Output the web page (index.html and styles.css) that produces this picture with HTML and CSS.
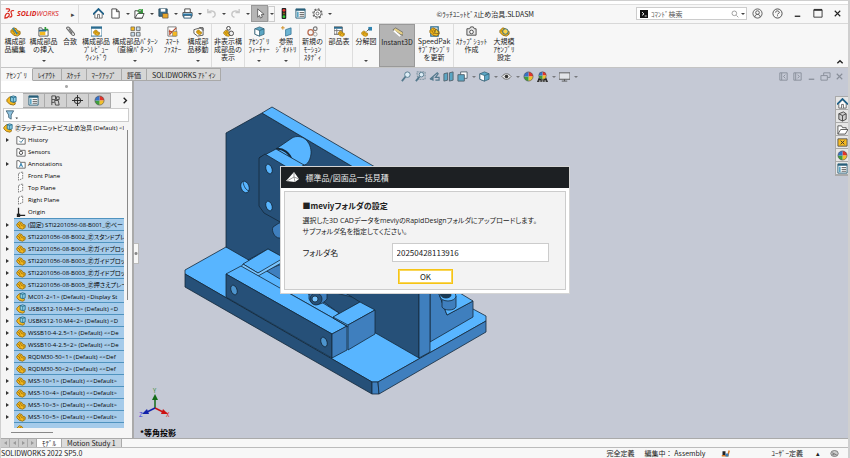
FILE: index.html
```
<!DOCTYPE html>
<html lang="ja">
<head>
    <meta charset="utf-8">
    <title>SOLIDWORKS</title>
    <link rel="stylesheet" href="styles.css">
</head>
<body>
    <!-- shared icons -->
    <svg class="defs" aria-hidden="true">
        <symbol id="part" viewBox="0 0 12 12">
            <path d="M1 5l3-3 3 1 1 2 3 1v3l-3 2-4-1-3-3z" fill="#f5b921" stroke="#8a6100" stroke-width=".9"/>
            <path d="M4 5c0-1 2-1 2 0s0 2 2 2 2 1 1 2M2 5l2 1 1 3" fill="none" stroke="#8a6100" stroke-width=".8"/>
        </symbol>
        <symbol id="asm" viewBox="0 0 12 12">
            <path d="M1 5l3-3 3 1v4l3 1v2l-2 1-4-1-3-3z" fill="#f5b921" stroke="#8a6100" stroke-width=".9"/>
            <path d="M5 2l3-1 3 1v5l-3 1-3-1z" fill="#8fd0e8" stroke="#175f80" stroke-width=".9"/>
            <path d="M5 2l3 1 3-1M8 3v5" fill="none" stroke="#175f80" stroke-width=".8"/>
        </symbol>
        <symbol id="folder" viewBox="0 0 12 12">
            <path d="M1 11V2h3l1 2h6v7z" fill="#fff" stroke="#555"/>
        </symbol>
        <symbol id="plane" viewBox="0 0 12 12">
            <path d="M3 3l5-2v8l-5 2z" fill="#fff" stroke="#666" stroke-dasharray="2 1"/>
        </symbol>
        <symbol id="ball" viewBox="0 0 12 12">
            <circle cx="6" cy="6" r="5" fill="#eee"/>
            <path d="M6 6V1a5 5 0 0 1 5 5z" fill="#e2352b"/>
            <path d="M6 6h5a5 5 0 0 1-5 5z" fill="#f0c02c"/>
            <path d="M6 6v5a5 5 0 0 1-5-5z" fill="#3f9f3d"/>
            <path d="M6 6H1a5 5 0 0 1 5-5z" fill="#3672c8"/>
            <circle cx="6" cy="6" r="5" fill="none" stroke="#444" stroke-width=".6"/>
        </symbol>
        <symbol id="cube" viewBox="0 0 12 12">
            <path d="M1 3l5-2 5 2v6l-5 2-5-2z" fill="#5ba6c4" stroke="#2d5c70" stroke-width=".8"/>
            <path d="M1 3l5 2v6l-5-2z" fill="#fff" stroke="#2d5c70" stroke-width=".8"/>
            <path d="M6 5l5-2" stroke="#2d5c70" stroke-width=".8"/>
        </symbol>
        <symbol id="house" viewBox="0 0 12 12">
            <path d="M2 6v5h8V6L6 2z" fill="#fff" stroke="#444" stroke-width=".8"/>
            <path d="M0 7l6-6 6 6" fill="none" stroke="#1c5f88" stroke-width="1.8"/>
            <path d="M5 11V7h2v4" fill="#fff" stroke="#444" stroke-width=".8"/>
        </symbol>
        <symbol id="list" viewBox="0 0 12 12">
            <path d="M1 1h10v10H1z" fill="#fff" stroke="#285f7a"/>
            <path d="M1 1h10v2H1z" fill="#285f7a"/>
            <path d="M2 4h2v6H2z" fill="#5ba6c4"/>
            <path d="M5 5h5M5 7h5M5 9h5" stroke="#555"/>
        </symbol>
        <symbol id="min" viewBox="0 0 12 12"><path d="M3 9h6" stroke="currentColor" stroke-width="1.4"/></symbol>
        <symbol id="close" viewBox="0 0 12 12"><path d="M3 3l6 6M9 3L3 9" stroke="currentColor" stroke-width="1.2"/></symbol>
    </svg>

    <div class="app">
        <header class="titlebar">
            <div class="brand">
                <svg class="ds" viewBox="0 0 12 12"><path d="M2 1h3c2 0 1 3-1 3M1 11c0-4 2-6 4-5s0 5-4 5zM11 3C8 2 7 4 8 6s1 4-2 4" fill="none" stroke="#d9261c" stroke-width="1.3"/></svg>
                <span class="wordmark"><b>SOLID</b>WORKS</span>
                <button class="more" aria-label="メニュー">▸</button>
            </div>
            <div class="quick">
                <button class="tool" aria-label="ホーム"><svg><use href="#house"/></svg></button>
                <button class="tool" aria-label="新規"><svg viewBox="0 0 12 12"><path d="M2 1h5l3 3v7H2zM7 1v3h3" fill="#fff" stroke="#444"/></svg></button><button class="caret" aria-label="新規オプション"></button>
                <button class="tool" aria-label="開く"><svg viewBox="0 0 12 12"><path d="M1 11V3h3l1 1h4v7z" fill="#fff" stroke="#444"/><path d="M1 11l3-5h7l-2 5z" fill="#fff" stroke="#444"/><path d="M4 4c1-3 4-3 5 0M9 1v4H5" fill="none" stroke="#2e9a35" stroke-width="1.4"/></svg></button><button class="caret" aria-label="開くオプション"></button>
                <button class="tool" aria-label="保存"><svg viewBox="0 0 12 12"><path d="M1 1h9v8H1z" fill="#3b6e8c" stroke="#26475a"/><path d="M3 1h5v3H3z" fill="#fff"/><path d="M5 6h6v5H5z" fill="#e8a62a" stroke="#555" stroke-width=".7"/></svg></button><button class="caret" aria-label="保存オプション"></button>
                <button class="tool" aria-label="印刷"><svg viewBox="0 0 12 12"><path d="M3 5V1h6v4M1 5h10v4H1z" fill="#fff" stroke="#444"/><path d="M1 6h10v3H1z" fill="#2f7fb0"/><path d="M2 8h8v3H2z" fill="#fff" stroke="#2a5570"/></svg></button><button class="caret" aria-label="印刷オプション"></button>
                <button class="tool off" aria-label="元に戻す"><svg viewBox="0 0 12 12"><path d="M2 1v4h4M2 5c3-3 8-2 8 2 0 2-2 3-3 3" fill="none" stroke="#c6c6c6" stroke-width="1.5"/></svg></button><button class="caret" aria-label="元に戻すオプション"></button>
                <button class="tool off" aria-label="やり直し"><svg viewBox="0 0 12 12"><path d="M10 1v4H6M10 5C7 2 2 3 2 7c0 2 2 3 3 3" fill="none" stroke="#c6c6c6" stroke-width="1.5"/></svg></button><button class="caret" aria-label="やり直しオプション"></button>
                <button class="tool on" aria-label="選択"><svg viewBox="0 0 12 12"><path d="M4 1v9l2-2 1 3 2-1-1-3h3z" fill="#fff" stroke="#444" stroke-width=".8"/></svg></button><button class="caret boxed" aria-label="選択オプション"></button>
                <button class="tool" aria-label="再構築"><svg viewBox="0 0 12 12"><rect x="4" y="0" width="5" height="12" rx="1" fill="#222"/><circle cx="6.500" cy="2.500" r="1.500" fill="#e33"/><circle cx="6.500" cy="6" r="1.200" fill="#886c18"/><circle cx="6.500" cy="9.500" r="1.500" fill="#3c3"/></svg></button>
                <button class="tool" aria-label="ファイル プロパティ"><svg><use href="#list"/></svg></button>
                <button class="tool" aria-label="オプション"><svg viewBox="0 0 12 12"><circle cx="6" cy="6" r="4" fill="#fff" stroke="#666"/><circle cx="6" cy="6" r="5" fill="none" stroke="#666" stroke-width="1.300" stroke-dasharray="2 1.900"/><circle cx="6" cy="6" r="1.600" fill="none" stroke="#666"/></svg></button><button class="caret" aria-label="その他"></button>
            </div>
            <div class="doc-title">©ﾗｯﾁﾕﾆｯﾄﾋﾞｽ止め治具.SLDASM</div>
            <div class="search">
                <svg viewBox="0 0 12 12"><path d="M0 0h12v12H0z" fill="#111"/><path d="M3 3l3 3-3 2M7 9h3" fill="none" stroke="#fff" stroke-width="1.300"/></svg>
                <input type="text" placeholder="ｺﾏﾝﾄﾞ検索" aria-label="コマンド検索">
                <svg viewBox="0 0 12 12"><circle cx="5" cy="5" r="3.500" fill="none" stroke="#777"/><path d="M8 8l3 3" stroke="#777"/></svg>
                <button class="caret" aria-label="検索オプション"></button>
            </div>
            <div class="winbtns">
                <button aria-label="ユーザー"><svg viewBox="0 0 12 12"><circle cx="6" cy="6" r="5" fill="none" stroke="#555"/><circle cx="6" cy="5" r="2" fill="none" stroke="#555"/><path d="M3 10c0-4 6-4 6 0" fill="none" stroke="#555"/></svg></button>
                <button aria-label="ヘルプ"><svg viewBox="0 0 12 12"><circle cx="6" cy="6" r="5" fill="none" stroke="#444"/><path d="M4 5c0-3 4-2 4 0 0 1-2 1-2 2M6 8v1" fill="none" stroke="#444"/></svg></button>
                <button aria-label="最小化"><svg><use href="#min"/></svg></button>
                <button aria-label="最大化"><svg viewBox="0 0 12 12"><path d="M2 2h9v8H2z" fill="none" stroke="#333"/><path d="M2 2h9" stroke="#333" stroke-width="2"/></svg></button>
                <button aria-label="閉じる"><svg><use href="#close"/></svg></button>
            </div>
        </header>

        <nav class="ribbon">
            <button><svg viewBox="0 0 12 12"><use href="#part"/><path d="M3 2l5 7" stroke="#2a82b0" stroke-width="1.600"/></svg>構成部<br>品編集</button>
            <button class="drop"><svg viewBox="0 0 12 12"><use href="#folder"/><path d="M2 6h6v4H2z" fill="#f5b921"/><path d="M8 1v3h3" fill="none" stroke="#2e9a35" stroke-width="1.800"/><path d="M1 4h8v2H1z" fill="#2b6c90"/></svg>構成部品<br>の挿入</button>
            <button><svg viewBox="0 0 12 12"><path d="M2 3l6 7c2 1 3-1 2-2L5 2C3 0 1 2 2 3l5 6M4 3l4 5" fill="none" stroke="#666" stroke-width="1.100"/></svg>合致</button>
            <button><svg viewBox="0 0 12 12"><path d="M0 1h12v10H0z" fill="#fff" stroke="#2b6c90"/><path d="M0 1h12v2H0z" fill="#2b6c90"/><use href="#part" x="2" y="3" width="8" height="8"/></svg>構成部品<br>ﾌﾟﾚﾋﾞｭｰ<br>ｳｨﾝﾄﾞｳ</button>
            <button class="drop"><svg viewBox="0 0 12 12"><path d="M1 1h4v4H1z" fill="#f5b921" stroke="#555" stroke-width=".7"/><path d="M7 1h4v4H7zM1 7h4v4H1zM7 7h4v4H7z" fill="#c7dbe8" stroke="#555" stroke-width=".8"/></svg>構成部品ﾊﾟﾀｰﾝ<br>(直線ﾊﾟﾀｰﾝ)</button>
            <button><svg viewBox="0 0 12 12"><path d="M1 1h9v10H1z" fill="#fff" stroke="#777"/><path d="M3 9l7-7M2 6h4M3 4v6" stroke="#b84d32" stroke-width="1.200"/><path d="M6 6h5v5H6z" fill="#f5b921" stroke="#777" stroke-width=".6"/></svg>ｽﾏｰﾄ<br>ﾌｧｽﾅｰ</button>
            <button class="drop"><svg viewBox="0 0 12 12"><path d="M1 4l7-2 3 3v5l-6 1-4-3z" fill="#fff" stroke="#555"/><use href="#part" x="3" y="3" width="7" height="7"/><path d="M7 2h4v3" fill="none" stroke="#222"/></svg>構成部<br>品移動</button>
            <button class="sep"><svg viewBox="0 0 12 12"><use href="#part" y="3" width="9" height="9"/><circle cx="6" cy="2.500" r="2" fill="#fff" stroke="#333"/><circle cx="9" cy="8" r="2.500" fill="#eee" stroke="#444"/></svg>非表示構<br>成部品の<br>表示</button>
            <button class="sep drop"><svg><use href="#cube"/></svg>ｱｾﾝﾌﾞﾘ<br>ﾌｨｰﾁｬｰ</button>
            <button class="drop"><svg viewBox="0 0 12 12"><path d="M5 4l6-2v7l-6 2z" fill="#6db4d2" stroke="#2b6c90" stroke-width=".8"/><path d="M2 0v4M0 2h4" stroke="#d08d20"/></svg>参照<br>ｼﾞｵﾒﾄﾘ</button>
            <button class="sep"><svg viewBox="0 0 12 12"><circle cx="4" cy="7" r="3" fill="none" stroke="#b86d50" stroke-width="1.400"/><circle cx="9" cy="3" r="2" fill="none" stroke="#777" stroke-width="1.300"/><circle cx="9" cy="9" r="2" fill="none" stroke="#999"/></svg>新規の<br>ﾓｰｼｮﾝ<br>ｽﾀﾃﾞｨ</button>
            <button class="sep"><svg viewBox="0 0 12 12"><path d="M0 1h9v8H0z" fill="#fff" stroke="#555"/><path d="M0 1h9v2H0z" fill="#2b6c90"/><path d="M0 5h9M3 3v6" stroke="#777"/><use href="#part" x="4" y="4" width="8" height="8"/></svg>部品表</button>
            <button class="sep drop"><svg viewBox="0 0 12 12"><use href="#part" y="4" width="8" height="8"/><path d="M8 1h4v4H8z" fill="#2f83b0"/><path d="M6 6l3-3" stroke="#555"/></svg>分解図</button>
            <button class="active"><svg viewBox="0 0 12 12"><path d="M1 3l3-2 8 5v3L9 8z" fill="#e6d188" stroke="#555" stroke-width=".7"/><path d="M2 4l7 6" stroke="#fff" stroke-width="2"/></svg>Instant3D</button>
            <button><svg viewBox="0 0 12 12"><path d="M2 1h8v10H2z" fill="#fff" stroke="#2b6c90" stroke-width="1.400"/><use href="#part"/><path d="M6 8l2-5 3 5z" fill="#f7d335" stroke="#333" stroke-width=".6"/></svg>SpeedPak<br>ｻﾌﾞｱｾﾝﾌﾞﾘ<br>を更新</button>
            <button class="sep"><svg viewBox="0 0 12 12"><path d="M1 3h3l1-2h3l1 2h2v7H1z" fill="#e8e8e8" stroke="#444"/><circle cx="6" cy="6.500" r="2" fill="#fff" stroke="#444"/></svg>ｽﾅｯﾌﾟｼｮｯﾄ<br>作成</button>
            <button><svg viewBox="0 0 12 12"><use href="#part"/><circle cx="7" cy="6" r="3" fill="#f9d24a" stroke="#2b6c90"/></svg>大規模<br>ｱｾﾝﾌﾞﾘ<br>設定</button>
            <button class="fold" aria-label="リボンを折りたたむ"><svg viewBox="0 0 12 12"><path d="M2 8l4-4 4 4" fill="none" stroke="#222" stroke-width="2"/></svg></button>
        </nav>

        <main class="workspace">
            <div class="tabs" role="tablist">
                <button class="tab current" role="tab">ｱｾﾝﾌﾞﾘ</button>
                <button class="tab" role="tab">ﾚｲｱｳﾄ</button>
                <button class="tab" role="tab">ｽｹｯﾁ</button>
                <button class="tab" role="tab">ﾏｰｸｱｯﾌﾟ</button>
                <button class="tab" role="tab">評価</button>
                <button class="tab" role="tab">SOLIDWORKS ｱﾄﾞｲﾝ</button>
            </div>
            <div class="hud">
                <button aria-label="全体表示"><svg viewBox="0 0 12 12"><circle cx="7" cy="4" r="3" fill="#dcecf5" stroke="#54798d"/><path d="M5 6l-4 5" stroke="#54798d" stroke-width="2"/></svg></button>
                <button aria-label="一部拡大"><svg viewBox="0 0 12 12"><path d="M2 1h9v8H3z" fill="none" stroke="#6f8896" stroke-dasharray="2 1"/><circle cx="7" cy="4" r="2.500" fill="#dcecf5" stroke="#54798d"/><path d="M5 6l-4 5" stroke="#54798d" stroke-width="2"/></svg></button>
                <button aria-label="前の表示"><svg viewBox="0 0 12 12"><path d="M1 9l8-7 1 1-3 4h4v3H7" fill="none" stroke="#54798d" stroke-width="1.300"/><path d="M1 9l4-3v5z" fill="#54798d"/></svg></button>
                <button aria-label="断面表示"><svg viewBox="0 0 12 12"><path d="M1 3l4-1v8l-4 1zM7 2l4-1v9l-4 1z" fill="#5ba6c4" stroke="#54646e"/></svg></button>
                <button aria-label="表示方向"><svg viewBox="0 0 12 12"><path d="M4 1h7v7H4z" fill="#fff" stroke="#54646e"/><path d="M1 4h7v7H1z" fill="#5ba6c4" stroke="#54646e"/></svg></button><button class="caret" aria-label="表示方向オプション"></button>
                <button aria-label="表示スタイル"><svg><use href="#cube"/></svg></button><button class="caret" aria-label="表示スタイルオプション"></button>
                <button aria-label="表示/非表示"><svg viewBox="0 0 12 12"><path d="M1 6c3-4 7-4 10 0-3 4-7 4-10 0z" fill="#eee" stroke="#666"/><circle cx="6" cy="6" r="2" fill="#333"/></svg></button><button class="caret" aria-label="表示/非表示オプション"></button>
                <button aria-label="外観編集"><svg><use href="#ball"/></svg></button>
                <button aria-label="シーン適用"><svg viewBox="0 0 12 12"><path d="M0 12l2-5h8l2 5z" fill="#222"/><path d="M2 11h2M5 11h2M8 11h2" stroke="#fff"/><use href="#ball" x="1" width="10" height="10"/></svg></button><button class="caret" aria-label="シーンオプション"></button>
                <button aria-label="表示設定"><svg viewBox="0 0 12 12"><path d="M0 2h12v7H0z" fill="#e2e4e8" stroke="#555"/><path d="M6 9v2M3 11h6" stroke="#555"/></svg></button><button class="caret" aria-label="表示設定オプション"></button>
            </div>
            <div class="docbtns">
                <button aria-label="左へ"><svg viewBox="0 0 12 12"><path d="M2 2h8v8H2zM4 2v8M8 4L6 6l2 2" fill="none" stroke="#888e99"/></svg></button>
                <button aria-label="右へ"><svg viewBox="0 0 12 12"><path d="M2 2h8v8H2zM4 2v8M6 4l2 2-2 2" fill="none" stroke="#888e99"/></svg></button>
                <button aria-label="ドキュメントを最小化"><svg><use href="#min"/></svg></button>
                <button aria-label="元のサイズ"><svg viewBox="0 0 12 12"><path d="M1 5h7v5H1zM4 5V2h7v5H8" fill="none" stroke="#888e99"/></svg></button>
                <button aria-label="ドキュメントを閉じる"><svg><use href="#close"/></svg></button>
            </div>

            <div class="split">
                <aside class="panel">
                    <div class="grip"></div>
                    <div class="ptabs">
                        <button class="on" aria-label="FeatureManager"><svg><use href="#asm"/></svg></button>
                        <button aria-label="PropertyManager"><svg><use href="#list"/></svg></button>
                        <button aria-label="ConfigurationManager"><svg viewBox="0 0 12 12"><path d="M2 1h4v4H2zM2 5v6M2 8h3M7 2h3v3H7zM5 6h4l1 5H6z" fill="none" stroke="#444"/></svg></button>
                        <button aria-label="DimXpertManager"><svg viewBox="0 0 12 12"><circle cx="6" cy="6" r="3.500" fill="none" stroke="#222"/><path d="M6 0v12M0 6h12" stroke="#222"/></svg></button>
                        <button aria-label="DisplayManager"><svg><use href="#ball"/></svg></button>
                        <button class="next" aria-label="次へ"><svg viewBox="0 0 12 12"><path d="M4 3l3 3-3 3" fill="none" stroke="#222" stroke-width="1.500"/></svg></button>
                    </div>
                    <button class="filter" aria-label="フィルター"><svg viewBox="0 0 16 12"><path d="M1 1h9L7 6v5l-3-2V6z" fill="#8fc3e0" stroke="#3c5e70"/><path d="M12 9h3l-1 2z" fill="#333"/></svg></button>
                    <div class="treebox">
                        <ul class="tree">
                            <li class="root"><svg><use href="#asm"/></svg><span>㊣ラッチユニットビス止め治具 (Default) &lt;I</span></li>
                            <li class="kids"><svg viewBox="0 0 12 12"><use href="#folder"/><path d="M4 7l2 2 3-4" stroke="#2b6c90" fill="none"/></svg><span>History</span></li>
                            <li><svg viewBox="0 0 12 12"><use href="#folder"/><circle cx="6" cy="7" r="2" fill="none" stroke="#333"/></svg><span>Sensors</span></li>
                            <li class="kids"><svg viewBox="0 0 12 12"><use href="#folder"/><path d="M4 10l2-5 2 5M5 8h2" fill="none" stroke="#1f76a8"/></svg><span>Annotations</span></li>
                            <li><svg><use href="#plane"/></svg><span>Front Plane</span></li>
                            <li><svg><use href="#plane"/></svg><span>Top Plane</span></li>
                            <li><svg><use href="#plane"/></svg><span>Right Plane</span></li>
                            <li><svg viewBox="0 0 12 12"><path d="M3 1v9h8" fill="none" stroke="#222" stroke-width="1.500"/><path d="M1 8h4v4H1z" fill="#222"/></svg><span>Origin</span></li>
                            <li class="kids sel"><svg><use href="#part"/></svg><span>(固定) STI2201056-08-B001_㊣ベー</span></li>
                            <li class="kids sel"><svg><use href="#part"/></svg><span>STI2201056-08-B002_㊣スタンドプレ</span></li>
                            <li class="kids sel"><svg><use href="#part"/></svg><span>STI2201056-08-B004_㊣ガイドブロッ</span></li>
                            <li class="kids sel"><svg><use href="#part"/></svg><span>STI2201056-08-B003_㊣ガイドブロッ</span></li>
                            <li class="kids sel"><svg><use href="#part"/></svg><span>STI2201056-08-B003_㊣ガイドブロッ</span></li>
                            <li class="kids sel"><svg><use href="#part"/></svg><span>STI2201056-08-B005_㊣押さえプレー</span></li>
                            <li class="kids sel"><svg><use href="#asm"/></svg><span>MC01-2&lt;1&gt; (Default) &lt;Display St</span></li>
                            <li class="kids sel"><svg><use href="#asm"/></svg><span>USBKS12-10-M4&lt;3&gt; (Default) &lt;D</span></li>
                            <li class="kids sel"><svg><use href="#asm"/></svg><span>USBKS12-10-M4&lt;2&gt; (Default) &lt;D</span></li>
                            <li class="kids sel"><svg><use href="#part"/></svg><span>WSSB10-4-2.5&lt;1&gt; (Default) &lt;&lt;De</span></li>
                            <li class="kids sel"><svg><use href="#part"/></svg><span>WSSB10-4-2.5&lt;2&gt; (Default) &lt;&lt;De</span></li>
                            <li class="kids sel"><svg><use href="#part"/></svg><span>RQDM30-50&lt;1&gt; (Default) &lt;&lt;Def</span></li>
                            <li class="kids sel"><svg><use href="#part"/></svg><span>RQDM30-50&lt;2&gt; (Default) &lt;&lt;Def</span></li>
                            <li class="kids sel"><svg><use href="#part"/></svg><span>MS5-10&lt;1&gt; (Default) &lt;&lt;Default&gt;</span></li>
                            <li class="kids sel"><svg><use href="#part"/></svg><span>MS5-10&lt;4&gt; (Default) &lt;&lt;Default&gt;</span></li>
                            <li class="kids sel"><svg><use href="#part"/></svg><span>MS5-10&lt;3&gt; (Default) &lt;&lt;Default&gt;</span></li>
                            <li class="kids sel"><svg><use href="#part"/></svg><span>MS5-10&lt;5&gt; (Default) &lt;&lt;Default&gt;</span></li>
                            <li class="sel"><svg><use href="#part"/></svg></li>
                        </ul>
                        <div class="vbar"></div>
                    </div>
                    <div class="hbar"></div>
                </aside>

                <section class="viewport">
                    <svg class="model" viewBox="134 81 714 357" stroke="#14283a" stroke-width=".8" stroke-linejoin="round">
                        <!-- base plate -->
                        <path d="M185 270L226 247 340 250 473 309 486 316V321L378 382H372L185 274z" fill="#58b5ff"/>
                        <path d="M185 274L372 382V394L185 287z" fill="#265078"/>
                        <path d="M372 382h6l1 12h-7z" fill="#3f7fbe"/>
                        <path d="M378 382L486 321V332L379 394z" fill="#3f7fbe"/>
                        <!-- right bracket -->
                        <path d="M430 280L439 294 447 315 473 301V317L430 342z" fill="#3f7fbe"/>
                        <path d="M436 286L447 315 473 301 450 287z" fill="#58b5ff"/>
                        <path d="M442 296v11c2 4 12 4 14 0V296z" fill="#3f7fbe"/>
                        <ellipse cx="448" cy="296" rx="8" ry="5" fill="#58b5ff"/>
                        <ellipse cx="446" cy="295" rx="5" ry="3" fill="#173854"/>
                        <!-- stand plate -->
                        <path d="M226 133L262 113 419 206V358L226 247z" fill="#265078"/>
                        <path d="M262 113L272 107 430 199 419 206z" fill="#58b5ff"/>
                        <path d="M419 206L430 199V352L419 358z" fill="#3f7fbe"/>
                        <ellipse cx="245" cy="187" rx="4" ry="6" transform="rotate(-20 245 187)" fill="#58b5ff"/>
                        <path d="M243 182c1 5 3 8 6 9" fill="none"/>
                        <path d="M276 149L292 138C301 133 312 141 311 154 310 162 306 166 302 165z" fill="#58b5ff"/>
                        <path d="M276 149c7-1 14 4 16 12" fill="none" stroke-width="2"/>
                        <path d="M259 158L276 149 304 165 292 172 265 155z" fill="#58b5ff"/>
                        <path d="M259 158L265 154 300 175V233L264 213 259 206z" fill="#265078"/>
                        <ellipse cx="269" cy="169" rx="3" ry="5" transform="rotate(-20 269 169)" fill="#58b5ff"/>
                        <ellipse cx="269" cy="206" rx="3" ry="5" transform="rotate(-20 269 206)" fill="#58b5ff"/>
                        <path d="M273 227l6-4h8v15h-8c-4 0-8-7-6-11z" fill="#3f7fbe"/>
                        <!-- guide blocks -->
                        <path d="M248 260L268 249 352 297 339 314z" fill="#3f7fbe"/>
                        <path d="M243 264L268 249 290 261 258 273z" fill="#58b5ff"/>
                        <path d="M243 264L258 273 292 253V257L258 276 241 267z" fill="#79c5ff"/>
                        <path d="M300 284L352 297 360 302 340 314z" fill="#265078"/>
                        <path d="M286 280L339 313 333 318 280 288z" fill="#58b5ff"/>
                        <path d="M309 294v5c3 7 13 7 18 0v-7z" fill="#3f7fbe"/>
                        <ellipse cx="316" cy="299" rx="6" ry="6" fill="#265078"/>
                        <circle cx="315" cy="299" r="3" fill="#79c5ff"/>
                        <path d="M333 317L360 302 375 310 348 325z" fill="#58b5ff"/>
                        <path d="M348 325L375 310V334L348 350z" fill="#3f7fbe"/>
                        <path d="M226 274L241 266 347 326 332 334z" fill="#58b5ff"/>
                        <path d="M226 274L332 334V358L226 297z" fill="#265078"/>
                        <path d="M332 334L347 326V350L332 358z" fill="#3f7fbe"/>
                        <path d="M333 318L348 327" fill="none"/>
                        <ellipse cx="234" cy="290" rx="3" ry="5" transform="rotate(-20 234 290)" fill="#4d94cd"/>
                        <ellipse cx="324" cy="342" rx="3" ry="5" transform="rotate(-20 324 342)" fill="#4d94cd"/>
                        <!-- triad -->
                        <g stroke-width="1.500">
                            <path d="M155 408V399" stroke="#126b16"/><path d="M152 400l3-6 3 6z" fill="#126b16" stroke="none"/>
                            <path d="M155 408l8 4" stroke="#c11"/><path d="M161 414l2-5 5 5z" fill="#c11" stroke="none"/>
                            <path d="M155 408l-8 4" stroke="#12a"/><path d="M149 414l-2-5-5 5z" fill="#12a" stroke="none"/>
                        </g>
                        <g class="axis" stroke="none">
                            <text x="153" y="393" fill="#2f8a32">Y</text>
                            <text x="166" y="417" fill="#d22">X</text>
                            <text x="139" y="417" fill="#33d">Z</text>
                        </g>
                    </svg>
                    <button class="handle" aria-label="パネルを閉じる"></button>
                    <div class="viewname">*等角投影</div>
                    <div class="taskpane">
                        <button aria-label="リソース"><svg><use href="#house"/></svg></button>
                        <button aria-label="デザイン ライブラリ"><svg viewBox="0 0 12 12"><path d="M2 3l5-2 3 2v6l-4 2-4-2z" fill="#ccc" stroke="#444"/><path d="M2 3l4 2v6M6 5l4-2" fill="none" stroke="#444"/></svg></button>
                        <button aria-label="ファイル エクスプローラ"><svg viewBox="0 0 12 12"><path d="M1 11V2h4l1 2h4v2M1 11l3-5h8l-3 5z" fill="#fff" stroke="#555"/></svg></button>
                        <button aria-label="ビュー パレット"><svg viewBox="0 0 12 12"><path d="M1 2h10v8H1z" fill="#f5b921" stroke="#555"/><path d="M4 4l4 4M8 4L4 8" stroke="#333"/></svg></button>
                        <button aria-label="外観"><svg><use href="#ball"/></svg></button>
                        <button aria-label="ユーザー定義プロパティ"><svg><use href="#list"/></svg></button>
                    </div>
                </section>
            </div>
        </main>

        <div class="sheets">
            <button class="nav" aria-label="最初"></button><button class="nav" aria-label="前"></button><button class="nav fwd" aria-label="次"></button><button class="nav fwd" aria-label="最後"></button>
            <button class="sheet current">ﾓﾃﾞﾙ</button>
            <button class="sheet">Motion Study 1</button>
        </div>

        <footer class="status">
            <span class="version">SOLIDWORKS 2022 SP5.0</span>
            <span>完全定義</span>
            <span class="editing">編集中： Assembly</span>
            <svg viewBox="0 0 12 12"><path d="M2 3h4v6H2z" fill="#222"/><path d="M1 9h8l2-7" fill="none" stroke="#de7b20" stroke-width="2"/><path d="M6 6h4v4H6z" fill="#357bb5"/></svg>
            <span class="units">ﾕｰｻﾞｰ定義</span>
            <span>▴</span>
            <svg viewBox="0 0 12 12"><ellipse cx="6" cy="6" rx="5" ry="4" fill="#ccc" stroke="#666"/><path d="M3 5l6 3M3 7l3 1" stroke="#555"/></svg>
        </footer>

        <form class="dialog" role="dialog" aria-labelledby="dlg-title">
            <h1 id="dlg-title"><svg viewBox="0 0 14 12"><path d="M0 10L8 1l5 7-4 3z" fill="#fff"/><path d="M1 10l7-4 5 2M8 1v5l1 5" fill="none" stroke="#777" stroke-width=".7"/></svg>標準品/図面品一括見積</h1>
            <div class="dialog-body">
                <h2>■meviyフォルダの設定</h2>
                <p>選択した3D CADデータをmeviyのRapidDesignフォルダにアップロードします。<br>サブフォルダ名を指定してください。</p>
                <div class="field">
                    <label for="folder-name">フォルダ名</label>
                    <input type="text" id="folder-name" value="20250428113916">
                </div>
                <button type="button" class="ok">OK</button>
            </div>
        </form>
    </div>
</body>
</html>
```
FILE: styles.css
```
*, *::before, *::after {
    box-sizing: border-box;
}
body {
    margin: 0;
    font-family: "Noto Sans CJK JP", sans-serif;
    font-size: 7px;
    line-height: 8px;
    color: #222;
}
button, input {
    font: inherit;
    color: inherit;
    margin: 0;
    padding: 0;
    border: 0;
    background: none;
}
button {
    flex-shrink: 0;
}
svg {
    display: block;
    flex-shrink: 0;
    width: 11px;
    height: 11px;
}
.defs {
    position: absolute;
    width: 0;
    height: 0;
}
.app {
    position: relative;
    display: flex;
    flex-direction: column;
    height: 100vh;
    border: 1px solid #cfcfcf;
    border-width: 1px 2px 0 1px;
    background: #f7f7f7;
    overflow: hidden;
}

/* title bar */
.titlebar {
    display: flex;
    align-items: center;
    height: 23px;
    padding-top: 3px;
    border-bottom: 1px solid #d8d8d8;
    box-shadow: inset 0 3px #fff, inset 0 4px #dedede;
}
.brand {
    display: flex;
    align-items: center;
    width: 78px;
    height: 100%;
    padding-left: 3px;
    border-right: 1px solid #ddd;
    color: #d9261c;
}
.wordmark {
    flex: 1;
    padding-left: 2px;
    font-family: "Open Sans", sans-serif;
    font-style: italic;
}
.more {
    width: 10px;
    color: #444;
}
.quick {
    display: flex;
    align-items: center;
    height: 100%;
    padding-left: 11px;
}
.tool {
    display: grid;
    place-items: center;
    width: 17px;
    height: 17px;
}
.tool.on {
    background: #b5b5b5;
    border: 1px solid #999;
}
.caret {
    width: 7px;
    height: 16px;
}
.caret::before {
    content: "";
    display: block;
    width: 4px;
    margin: auto;
    border: 2px solid transparent;
    border-top-color: #444;
    border-bottom: 0;
}
.caret.boxed {
    border: 1px solid #ccc;
}
.doc-title {
    flex: 1;
    text-align: right;
    padding-right: 102px;
    white-space: nowrap;
}
.search {
    display: flex;
    align-items: center;
    width: 111px;
    height: 13px;
    padding-left: 3px;
    border: 1px solid #ccc;
    background: #fff;
}
.search svg {
    width: 8px;
    height: 8px;
}
.search input {
    flex: 1;
    min-width: 0;
    padding-left: 3px;
}
.search input::placeholder {
    color: #555;
}
.search .caret {
    height: 11px;
}
.winbtns {
    display: flex;
    gap: 9px;
    padding: 0 5px;
}

/* ribbon */
.ribbon {
    display: grid;
    grid-template-columns: 28px 29px 24px 28px 50px 25px 26px 33px 29px 26px 26px 27px 27px 36px 38px 36px 30px 1fr;
    height: 44px;
    border-bottom: 1px solid #c4c4c4;
}
.ribbon button {
    position: relative;
    display: flex;
    flex-direction: column;
    align-items: center;
    padding-top: 2px;
    white-space: nowrap;
    text-align: center;
}
.ribbon .sep {
    border-left: 1px solid #ddd;
}
.ribbon .active {
    background: #b4b4b4;
    border: 1px solid #999;
}
.ribbon .drop::after {
    content: "";
    position: absolute;
    bottom: 5px;
    width: 4px;
    border: 2px solid transparent;
    border-top-color: #444;
    border-bottom: 0;
}
.ribbon .fold {
    align-items: flex-end;
    justify-content: flex-end;
    padding: 0 4px 1px 0;
}
.fold svg {
    width: 8px;
    height: 8px;
}

/* workspace */
.workspace {
    position: relative;
    display: flex;
    flex: 1;
    flex-direction: column;
    min-height: 0;
    background: #c5c9d5;
}
.tabs {
    display: flex;
    height: 13px;
}
.tab {
    padding: 0 5px;
    border: 1px solid #a9a9a9;
    border-left: 0;
    background: #d6d6d6;
    white-space: nowrap;
}
.tab.current {
    background: #f7f7f7;
    border-top-color: #f7f7f7;
    border-bottom-color: #f7f7f7;
}
.hud, .docbtns {
    position: absolute;
    top: 3px;
    display: flex;
}
.hud {
    left: 134px;
    right: 0;
    justify-content: center;
    gap: 3px;
    padding-right: 4px;
}
.hud .caret {
    width: 5px;
    height: 11px;
    opacity: 0.6;
}
.docbtns {
    right: 3px;
    gap: 3px;
    color: #888e99;
}
.split {
    display: flex;
    flex: 1;
    min-height: 0;
}
.panel {
    display: flex;
    flex-direction: column;
    width: 133px;
    border-right: 2px solid #aaa;
    background: #f5f5f5;
}
.grip {
    height: 12px;
    border-bottom: 1px solid #ccc;
    background: radial-gradient(circle at 50% 50%, #aaa 1px, #fff 2px);
}
.ptabs {
    display: flex;
    height: 15px;
}
.ptabs button {
    display: grid;
    place-items: center;
    width: 22px;
    border: 1px solid #aaa;
    border-left: 0;
    background: #d2d2d2;
}
.ptabs .on {
    border-color: transparent;
    background: none;
}
.ptabs .next {
    margin-left: auto;
    width: 14px;
    border: 0;
    background: none;
}
.filter {
    width: 126px;
    height: 14px;
    margin-left: 2px;
    padding-left: 1px;
    border: 1px solid #ccc;
    background: #fff;
}
.filter svg {
    width: 14px;
    height: 10px;
}
.treebox {
    display: flex;
    flex: 1;
    min-height: 0;
    overflow: hidden;
}
.tree {
    flex: 1;
    min-width: 0;
    margin: 0;
    padding: 0;
    list-style: none;
    font-family: "Open Sans", "Noto Sans CJK JP", sans-serif;
    font-size: 6px;
    color: #000;
}
.tree li {
    position: relative;
    display: flex;
    align-items: center;
    height: 12px;
    margin-left: 13px;
    padding-left: 2px;
    white-space: nowrap;
}
.tree svg {
    width: 10px;
    height: 10px;
}
.tree span {
    flex: 1;
    min-width: 0;
    overflow: hidden;
    padding-left: 2px;
    font-feature-settings: "palt";
}
.tree .root {
    margin-left: 0;
}
.tree .sel {
    background: #a5cbea;
    border-top: 1px solid #4f93bf;
}
.tree .kids::before {
    content: "";
    position: absolute;
    left: -8px;
    border: 2px solid transparent;
    border-left: 3px solid #333;
    border-right: 0;
}
.vbar {
    width: 1px;
    height: 170px;
    margin: 8px 4px 0 3px;
    background: #888;
}
.hbar {
    width: 42px;
    height: 1px;
    margin: 4px 0 5px 10px;
    background: #888;
}
.viewport {
    position: relative;
    flex: 1;
    min-width: 0;
}
.model {
    width: 100%;
    height: 100%;
}
.axis {
    font-size: 6px;
}
.handle {
    position: absolute;
    left: 0;
    top: 162px;
    width: 5px;
    height: 21px;
    border: 1px solid #bbb;
    border-left: 0;
    background: radial-gradient(circle at 50% 50%, #888 1px, #f7f7f7 2px);
}
.viewname {
    position: absolute;
    left: 6px;
    bottom: 1px;
    font-size: 8px;
    font-weight: bold;
    color: #000;
}
.taskpane {
    position: absolute;
    right: 0;
    top: 15px;
    display: grid;
    border: 1px solid #aaa;
    border-right: 0;
}
.taskpane button {
    display: grid;
    place-items: center;
    width: 12px;
    height: 13px;
    border-bottom: 1px solid #aaa;
    background: #e6e6e6;
}

/* bottom bars */
.sheets {
    display: flex;
    height: 10px;
    border-top: 1px solid #aaa;
    border-bottom: 1px solid #bbb;
}
.nav {
    display: grid;
    place-items: center;
    width: 9px;
    border-right: 1px solid #aaa;
    background: #ccc;
}
.nav::before {
    content: "";
    border: 2px solid transparent;
    border-right: 3px solid #999;
    border-left: 0;
}
.nav.fwd::before {
    border-right: 0;
    border-left: 3px solid #999;
}
.sheet {
    padding: 0 5px;
    border-right: 1px solid #aaa;
    background: #dcdcdc;
}
.sheet.current {
    background: #fff;
}
.status {
    display: flex;
    align-items: center;
    gap: 10px;
    height: 10px;
    padding-right: 9px;
    white-space: nowrap;
}
.version {
    flex: 1;
}
.editing {
    padding-right: 5px;
}
.units {
    padding: 0 3px 0 32px;
}
.status svg {
    width: 9px;
    height: 9px;
}

/* dialog */
.dialog {
    position: absolute;
    left: 50%;
    top: 50%;
    width: 288px;
    transform: translate(-50%, -50%);
    background: #fff;
    font-size: 8px;
    line-height: 11px;
    font-feature-settings: "palt";
    outline: 1px solid #d5d5d5;
}
.dialog h1 {
    display: flex;
    align-items: center;
    gap: 6px;
    height: 21px;
    margin: 0;
    padding-left: 5px;
    background: #1d2023;
    color: #eee;
    font-size: 8px;
    font-weight: normal;
}
.dialog h1 svg {
    width: 14px;
    height: 12px;
}
.dialog-body {
    margin: 3px;
    padding: 8px 16px 5px 18px;
    border: 1px solid #ccc;
    background: #f3f3f3;
}
.dialog h2 {
    margin: 0 0 4px;
    font-size: 8px;
}
.dialog p {
    margin: 0;
    font-family: "Open Sans", "Noto Sans CJK JP", sans-serif;
    font-size: 7px;
    white-space: nowrap;
}
.field {
    display: flex;
    align-items: center;
    margin: 6px 0 7px;
}
.field label {
    width: 89px;
}
.field input {
    flex: 1;
    min-width: 0;
    height: 19px;
    padding: 0 4px;
    border: 1px solid #ccc;
    background: #fff;
}
.ok {
    display: block;
    width: 55px;
    height: 15px;
    margin: 0 auto;
    border: 1px solid #f6c415;
    outline: 1px solid #f9d658;
    outline-offset: -2px;
    background: #fff;
}
```
